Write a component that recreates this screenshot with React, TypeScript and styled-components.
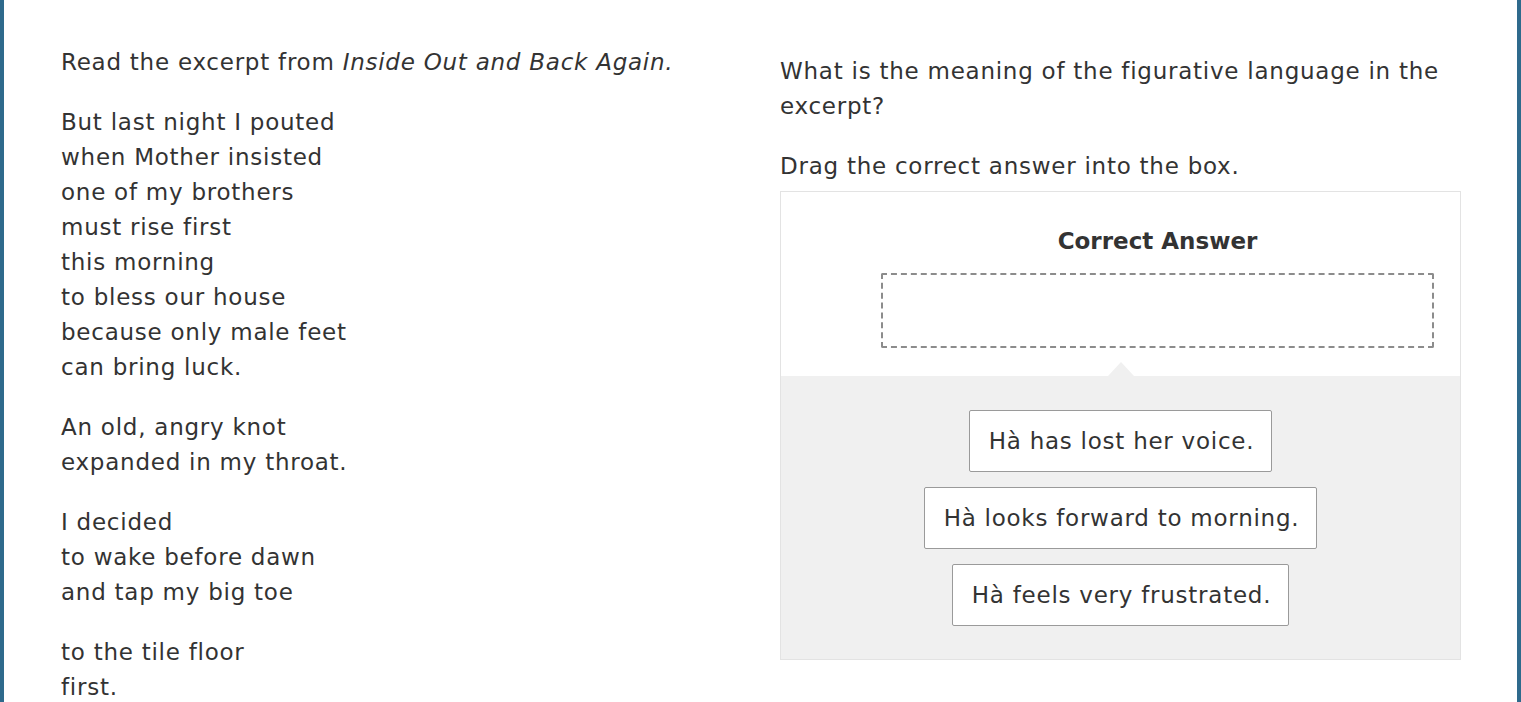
import styled, {createGlobalStyle} from "styled-components";

const GlobalStyle = createGlobalStyle`
  html, body {
    margin: 0;
    padding: 0;
    background: #ffffff;
  }
  body {
    font-family: "DejaVu Sans", "Open Sans", sans-serif;
    color: #333333;
  }
`;

const Frame = styled.div`
  box-sizing: border-box;
  height: 702px;
  overflow: hidden;
  border-left: 4px solid #2e6a8c;
  border-right: 4px solid #2e6a8c;
  padding: 45px 56px 0 57px;
  display: grid;
  grid-template-columns: 681px 681px;
  column-gap: 38px;
  font-size: 23px;
  line-height: 35px;
  letter-spacing: 0.75px;
`;

const Passage = styled.div``;

const Paragraph = styled.p`
  margin: 0 0 25px;
`;

const Question = styled.div`
  padding-top: 9px;
`;

const Prompt = styled.p`
  margin: 0 0 25px;
`;

const Instruction = styled.p`
  margin: 0;
`;

const DragBox = styled.div`
  margin-top: 7px;
  border: 1px solid #e3e3e3;
  display: flex;
  flex-direction: column;
`;

const TargetArea = styled.div`
  background: #ffffff;
  padding: 34px 26px 28px 100px;
  display: flex;
  flex-direction: column;
  align-items: stretch;
`;

const TargetTitle = styled.div`
  font-weight: 700;
  font-size: 23px;
  line-height: 30px;
  letter-spacing: 0;
  text-align: center;
  color: #333333;
  margin-bottom: 17px;
`;

const DropZone = styled.div`
  height: 71px;
  border: 2px dashed #8c8c8c;
  border-radius: 2px;
`;

const SourceArea = styled.div`
  position: relative;
  background: #f0f0f0;
  padding: 34px 0 33px;
  display: flex;
  flex-direction: column;
  align-items: center;
  gap: 15px;

  &::before {
    content: "";
    position: absolute;
    top: -14px;
    left: 50%;
    margin-left: -13px;
    border-left: 13px solid transparent;
    border-right: 13px solid transparent;
    border-bottom: 14px solid #f0f0f0;
  }
`;

const Chip = styled.div`
  background: #ffffff;
  border: 1px solid #9a9a9a;
  border-radius: 2px;
  padding: 13px 17px 12px 19px;
  white-space: nowrap;
`;

const stanzas = [
  ["But last night I pouted", "when Mother insisted", "one of my brothers", "must rise first", "this morning", "to bless our house", "because only male feet", "can bring luck."],
  ["An old, angry knot", "expanded in my throat."],
  ["I decided", "to wake before dawn", "and tap my big toe"],
  ["to the tile floor", "first."],
];

const answers = ["Hà has lost her voice.", "Hà looks forward to morning.", "Hà feels very frustrated."];

const App = () => {
  return (
    <>
      <GlobalStyle/>
      <Frame>
        <Passage>
          <Paragraph>
            Read the excerpt from <em>Inside Out and Back Again.</em>
          </Paragraph>
          {stanzas.map((lines, i) => (
            <Paragraph key={i}>
              {lines.map((line, j) => (
                <span key={j}>
                  {line}
                  {j < lines.length - 1 ? <br/> : null}
                </span>
              ))}
            </Paragraph>
          ))}
        </Passage>
        <Question>
          <Prompt>What is the meaning of the figurative language in the excerpt?</Prompt>
          <Instruction>Drag the correct answer into the box.</Instruction>
          <DragBox>
            <TargetArea>
              <TargetTitle>Correct Answer</TargetTitle>
              <DropZone/>
            </TargetArea>
            <SourceArea>
              {answers.map(a => (
                <Chip key={a}>{a}</Chip>
              ))}
            </SourceArea>
          </DragBox>
        </Question>
      </Frame>
    </>
  );
};

export default App;
